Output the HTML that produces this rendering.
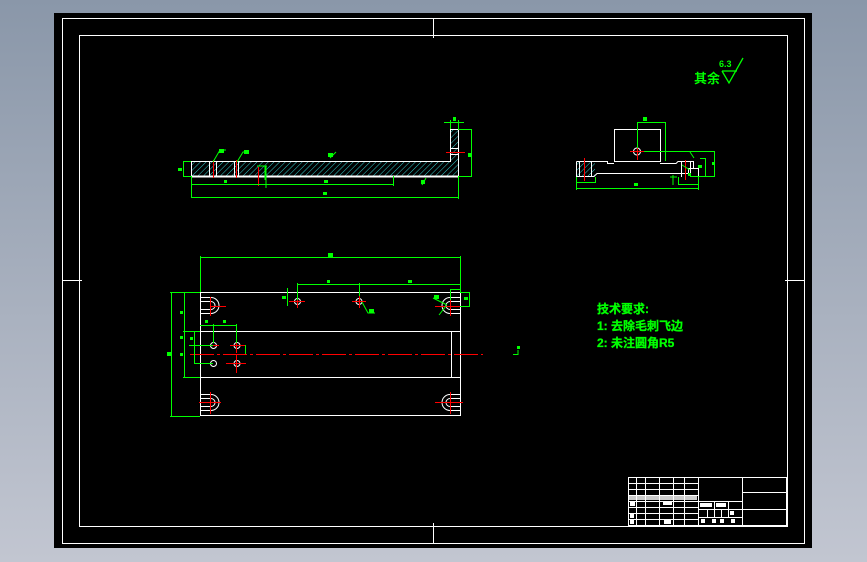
<!DOCTYPE html>
<html><head><meta charset="utf-8"><style>
html,body{margin:0;padding:0;width:867px;height:562px;overflow:hidden;background:linear-gradient(#8a97a9,#c2c6d1);}
svg{position:absolute;left:0;top:0}
text{font-family:"Liberation Sans","Noto Sans CJK SC",sans-serif;}
</style></head><body>
<svg width="867" height="562" viewBox="0 0 867 562">
<defs>
<pattern id="h" width="4" height="4" patternUnits="userSpaceOnUse" patternTransform="rotate(45)">
<line x1="0" y1="0" x2="0" y2="4" stroke="#3cc" stroke-width="1"/>
</pattern>
</defs>
<rect x="54" y="13" width="758" height="535" fill="#000"/>
<g fill="none" stroke="#fff" stroke-width="1">
<rect x="62.5" y="18.5" width="742" height="525"/>
<rect x="79.5" y="35.5" width="708" height="491"/>
<line x1="433.5" y1="18" x2="433.5" y2="38"/>
<line x1="433.5" y1="523" x2="433.5" y2="543"/>
<line x1="62" y1="280.5" x2="82" y2="280.5"/>
<line x1="785" y1="280.5" x2="805" y2="280.5"/>
</g>
<!-- side view -->
<rect x="191" y="161" width="267" height="15" fill="url(#h)"/>
<rect x="450" y="129" width="8" height="32" fill="url(#h)"/>
<g fill="none" stroke="#fff" stroke-width="1">
<path d="M191.5 161.5H450.5V129.5H458.5V176.5H191.5Z"/>
<line x1="191" y1="176.5" x2="458" y2="176.5" stroke-width="2"/>
<line x1="209.5" y1="161" x2="209.5" y2="176"/><line x1="216.5" y1="161" x2="216.5" y2="176"/>
<line x1="234.5" y1="161" x2="234.5" y2="176"/><line x1="238.5" y1="161" x2="238.5" y2="176"/>
<line x1="450" y1="148.5" x2="458" y2="148.5"/><line x1="450" y1="154.5" x2="458" y2="154.5"/>
</g>
<g stroke="#f00" stroke-width="1">
<line x1="213.5" y1="160" x2="213.5" y2="178"/><line x1="236.5" y1="160" x2="236.5" y2="178"/>
<line x1="258.5" y1="167" x2="258.5" y2="186"/><line x1="446" y1="152.5" x2="465" y2="152.5"/>
</g>
<g fill="none" stroke="#0f0" stroke-width="1">
<line x1="191.5" y1="176" x2="191.5" y2="198"/>
<line x1="191" y1="184.5" x2="393" y2="184.5"/><line x1="393.5" y1="176" x2="393.5" y2="186"/>
<line x1="191" y1="197.5" x2="458" y2="197.5"/><line x1="458.5" y1="176" x2="458.5" y2="199"/>
<line x1="183" y1="161.5" x2="191" y2="161.5"/><line x1="183" y1="176.5" x2="191" y2="176.5"/><line x1="183.5" y1="161" x2="183.5" y2="177"/>
<line x1="444" y1="122.5" x2="464" y2="122.5"/><line x1="450.5" y1="120" x2="450.5" y2="129"/><line x1="458.5" y1="120" x2="458.5" y2="129"/>
<line x1="458" y1="129.5" x2="472" y2="129.5"/><line x1="458" y1="176.5" x2="472" y2="176.5"/><line x1="471.5" y1="129" x2="471.5" y2="177"/>
<path d="M213 162L220 150H226M237 162L243 152H249M257 166H267M266 166V188M265 166V180"/>
<path d="M330 158L336 152M422 185L426 178"/>
</g>
<g fill="#0f0" font-size="5">
<rect x="178" y="168" width="4" height="3"/><rect x="219" y="149" width="5" height="4"/><rect x="244" y="150" width="5" height="4"/>
<rect x="224" y="180" width="3" height="3"/><rect x="324" y="180" width="4" height="3"/><rect x="323" y="192" width="4" height="3"/>
<rect x="328" y="153" width="5" height="4"/><rect x="421" y="180" width="4" height="4"/><rect x="453" y="117" width="3" height="4"/><rect x="468" y="153" width="3" height="4"/>
</g>
<!-- plan view -->
<g fill="none" stroke="#fff" stroke-width="1">
<rect x="200.5" y="292.5" width="260" height="123"/>
<line x1="200" y1="331.5" x2="460" y2="331.5"/><line x1="200" y1="377.5" x2="460" y2="377.5"/>
<line x1="451.5" y1="331" x2="451.5" y2="377"/>
<path d="M200 297.5H211A8 8 0 0 1 211 313.5H200M200 301.5H211A4 4 0 0 1 211 309.5H200"/>
<path d="M200 394.5H211A8 8 0 0 1 211 410.5H200M200 398.5H211A4 4 0 0 1 211 406.5H200"/>
<path d="M460 297.5H450A8 8 0 0 0 450 313.5H460M460 301.5H450A4 4 0 0 0 450 309.5H460"/>
<path d="M460 394.5H450A8 8 0 0 0 450 410.5H460M460 398.5H450A4 4 0 0 0 450 406.5H460"/>
<circle cx="297.5" cy="301.5" r="3"/><circle cx="359" cy="301.5" r="3"/>
<circle cx="213.5" cy="345.5" r="3"/><circle cx="237" cy="345.5" r="3"/>
<circle cx="213.5" cy="363.5" r="3"/><circle cx="237" cy="363.5" r="3"/>
</g>
<g stroke="#f00" stroke-width="1">
<line x1="190" y1="354.5" x2="483" y2="354.5" stroke-dasharray="24,3,3,3"/>
<line x1="210" y1="306.5" x2="226" y2="306.5"/><line x1="210.5" y1="297" x2="210.5" y2="316"/>
<line x1="199" y1="402.5" x2="221" y2="402.5"/><line x1="210.5" y1="392" x2="210.5" y2="414"/>
<line x1="435" y1="306.5" x2="462" y2="306.5"/><line x1="450.5" y1="297" x2="450.5" y2="316"/>
<line x1="435" y1="402.5" x2="463" y2="402.5"/><line x1="450.5" y1="392" x2="450.5" y2="414"/>
<line x1="289" y1="301.5" x2="305" y2="301.5"/><line x1="297.5" y1="294" x2="297.5" y2="308"/>
<line x1="352" y1="301.5" x2="366" y2="301.5"/><line x1="359.5" y1="295" x2="359.5" y2="308"/>
<line x1="203" y1="345.5" x2="219" y2="345.5"/><line x1="230" y1="345.5" x2="246" y2="345.5"/><line x1="236.5" y1="337" x2="236.5" y2="353"/>
<line x1="226" y1="363.5" x2="246" y2="363.5"/><line x1="236.5" y1="355" x2="236.5" y2="373"/>
</g>
<g fill="none" stroke="#0f0" stroke-width="1">
<line x1="200" y1="257.5" x2="461" y2="257.5"/><line x1="200.5" y1="256" x2="200.5" y2="292"/><line x1="460.5" y1="256" x2="460.5" y2="292"/>
<line x1="297" y1="284.5" x2="460" y2="284.5"/><line x1="297.5" y1="283" x2="297.5" y2="300"/><line x1="359.5" y1="283" x2="359.5" y2="296"/>
<line x1="287.5" y1="288" x2="287.5" y2="306"/>
<line x1="200" y1="325.5" x2="237" y2="325.5"/><line x1="213.5" y1="324" x2="213.5" y2="343"/><line x1="236.5" y1="324" x2="236.5" y2="343"/>
<line x1="170" y1="292.5" x2="200" y2="292.5"/><line x1="170" y1="416.5" x2="200" y2="416.5"/><line x1="171.5" y1="292" x2="171.5" y2="417"/>
<line x1="184.5" y1="292" x2="184.5" y2="378"/><line x1="183" y1="377.5" x2="200" y2="377.5"/>
<line x1="183" y1="331.5" x2="200" y2="331.5"/><line x1="194.5" y1="331" x2="194.5" y2="364"/>
<line x1="194" y1="363.5" x2="213" y2="363.5"/><line x1="189" y1="345.5" x2="213" y2="345.5"/>
<line x1="245.5" y1="345" x2="245.5" y2="354"/>
<line x1="460" y1="292.5" x2="470" y2="292.5"/><line x1="460" y1="306.5" x2="470" y2="306.5"/><line x1="469.5" y1="292" x2="469.5" y2="307"/>
<line x1="450.5" y1="289" x2="450.5" y2="300"/><line x1="450" y1="289.5" x2="460" y2="289.5"/>
<path d="M362 302L368 313H375M433 298L447 305M439 315L446 306M513 354.5H518V350"/>
</g>
<g fill="#0f0">
<rect x="328" y="253" width="5" height="4"/><rect x="327" y="280" width="3" height="3"/><rect x="408" y="280" width="4" height="3"/>
<rect x="282" y="296" width="4" height="3"/><rect x="369" y="309" width="5" height="4"/><rect x="434" y="295" width="5" height="4"/><rect x="464" y="297" width="4" height="3"/>
<rect x="205" y="320" width="3" height="3"/><rect x="223" y="320" width="3" height="3"/><rect x="180" y="311" width="3" height="3"/>
<rect x="180" y="336" width="3" height="3"/><rect x="190" y="337" width="3" height="3"/><rect x="167" y="352" width="4" height="4"/><rect x="180" y="353" width="3" height="3"/><rect x="517" y="346" width="3" height="3"/>
</g>
<!-- right view -->
<rect x="576" y="161" width="19" height="16" fill="url(#h)"/>
<g fill="none" stroke="#fff" stroke-width="1">
<rect x="614.5" y="129.5" width="46" height="32"/>
<path d="M576.5 161.5H607.5V163.5H614M660 163.5H676L678 161.5H693.5V168M576.5 161.5V176.5H594L597 173.5H688.5V168.5H698.5V176.5"/>
<line x1="579.5" y1="161" x2="579.5" y2="177"/><line x1="591.5" y1="161" x2="591.5" y2="177"/>
<line x1="681.5" y1="161" x2="681.5" y2="177"/><line x1="690.5" y1="161" x2="690.5" y2="177"/>
<circle cx="637" cy="151.5" r="3.5"/>
</g>
<g stroke="#f00" stroke-width="1">
<line x1="630" y1="151.5" x2="644" y2="151.5"/><line x1="637.5" y1="142" x2="637.5" y2="160"/>
<line x1="584.5" y1="158" x2="584.5" y2="181"/><line x1="685.5" y1="160" x2="685.5" y2="180"/>
</g>
<g fill="none" stroke="#0f0" stroke-width="1">
<line x1="637" y1="122.5" x2="666" y2="122.5"/><line x1="637.5" y1="122" x2="637.5" y2="148"/><line x1="665.5" y1="122" x2="665.5" y2="161"/>
<line x1="644" y1="151.5" x2="715" y2="151.5"/><line x1="714.5" y1="151" x2="714.5" y2="177"/><line x1="690" y1="176.5" x2="715" y2="176.5"/>
<line x1="700" y1="158.5" x2="706" y2="158.5"/><line x1="705.5" y1="158" x2="705.5" y2="177"/>
<line x1="576" y1="188.5" x2="698" y2="188.5"/><line x1="576.5" y1="177" x2="576.5" y2="190"/><line x1="698.5" y1="177" x2="698.5" y2="190"/>
<line x1="576" y1="182.5" x2="595" y2="182.5"/><line x1="595.5" y1="177" x2="595.5" y2="183"/>
<line x1="678" y1="184.5" x2="698" y2="184.5"/><line x1="678.5" y1="177" x2="678.5" y2="185"/>
<path d="M673 175V185M670 177H677M690 152L694 158M682 165L690 170"/>
</g>
<g fill="#0f0">
<rect x="643" y="117" width="4" height="4"/><rect x="634" y="183" width="4" height="3"/><rect x="698" y="165" width="4" height="3"/><rect x="688" y="173" width="3" height="3"/><rect x="712" y="162" width="3" height="3"/>
</g>
<!-- roughness -->
<g fill="none" stroke="#0f0" stroke-width="1.3"><path d="M722 71H737M722 71L729 83L743 58"/></g>
<text x="719" y="67" fill="#0f0" font-size="9" font-family="Liberation Mono" font-weight="bold">6.3</text>
<text x="694" y="83" fill="#0f0" font-size="13" font-weight="bold">其余</text>
<!-- requirements -->
<g fill="#0f0" font-size="12" font-weight="bold" stroke="#0f0" stroke-width="0.3">
<text x="597" y="313">技术要求:</text>
<text x="597" y="330">1: 去除毛刺飞边</text>
<text x="597" y="347">2: 未注圆角R5</text>
</g>
<!-- title block -->
<g fill="none" stroke="#fff" stroke-width="1">
<rect x="628.5" y="477.5" width="158" height="48"/>
<line x1="628" y1="483.5" x2="698" y2="483.5"/><line x1="628" y1="489.5" x2="698" y2="489.5"/><line x1="628" y1="495.5" x2="698" y2="495.5"/>
<line x1="628" y1="501.5" x2="742" y2="501.5"/><line x1="628" y1="507.5" x2="698" y2="507.5"/><line x1="628" y1="513.5" x2="698" y2="513.5"/><line x1="628" y1="519.5" x2="698" y2="519.5"/>
<line x1="698" y1="509.5" x2="742" y2="509.5"/><line x1="698" y1="517.5" x2="742" y2="517.5"/>
<line x1="742" y1="492.5" x2="787" y2="492.5"/><line x1="742" y1="509.5" x2="787" y2="509.5"/>
<line x1="636.5" y1="477" x2="636.5" y2="526"/><line x1="645.5" y1="477" x2="645.5" y2="526"/><line x1="659.5" y1="477" x2="659.5" y2="526"/>
<line x1="673.5" y1="477" x2="673.5" y2="526"/><line x1="684.5" y1="477" x2="684.5" y2="526"/><line x1="698.5" y1="477" x2="698.5" y2="526"/><line x1="742.5" y1="477" x2="742.5" y2="526"/>
<line x1="707.5" y1="509" x2="707.5" y2="517"/><line x1="714.5" y1="501" x2="714.5" y2="517"/><line x1="721.5" y1="509" x2="721.5" y2="517"/><line x1="728.5" y1="501" x2="728.5" y2="517"/>
</g>
<g fill="#fff">
<rect x="629" y="496" width="68" height="4" opacity=".8"/><rect x="630" y="502" width="5" height="4"/><rect x="663" y="502" width="9" height="3"/>
<rect x="700" y="503" width="12" height="4"/><rect x="716" y="503" width="10" height="4"/><rect x="730" y="511" width="4" height="4"/>
<rect x="701" y="519" width="4" height="4"/><rect x="712" y="519" width="4" height="4"/><rect x="720" y="519" width="4" height="4"/><rect x="731" y="519" width="4" height="4"/>
<rect x="630" y="514" width="4" height="4"/><rect x="630" y="520" width="4" height="4"/><rect x="664" y="520" width="7" height="4"/>
</g>
</svg>
</body></html>
